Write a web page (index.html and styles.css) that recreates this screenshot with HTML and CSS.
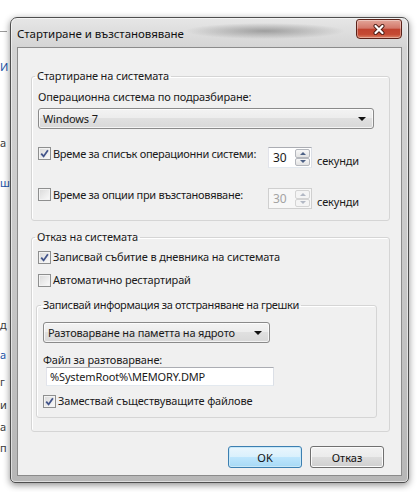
FILE: index.html
```html
<!DOCTYPE html>
<html lang="bg">
<head>
    <meta charset="UTF-8">
    <title>Стартиране и възстановяване</title>
    <link rel="stylesheet" href="styles.css">
</head>
<body>
    <div class="desktop">
        <!-- what shows of the window behind the dialog -->
        <div class="behind">
            <div class="rule"></div>
            <div class="b-1 link">И</div>
            <div class="b-2">а</div>
            <div class="b-3 link">ш</div>
            <div class="b-4">д</div>
            <div class="b-5 link">а</div>
            <div class="b-6">г</div>
            <div class="b-7">и</div>
            <div class="b-8">а</div>
            <div class="b-9">п</div>
        </div>

        <div class="window">
            <div class="titlebar">
                <span class="title">Стартиране и възстановяване</span>
                <div class="close">
                    <svg width="14" height="11" viewBox="0 0 14 11">
                        <path d="M3.5 2 L10.5 9 M10.5 2 L3.5 9" stroke="#4b1c14" stroke-width="4" stroke-linecap="round"/>
                        <path d="M3.5 2 L10.5 9 M10.5 2 L3.5 9" stroke="#fff" stroke-width="2.2" stroke-linecap="round"/>
                    </svg>
                </div>
            </div>

            <div class="client">
                <fieldset class="group startup">
                    <legend>Стартиране на системата</legend>
                    <div class="caption">Операционна система по подразбиране:</div>
                    <div class="combo wide"><span>Windows 7</span><span class="arrow"></span></div>

                    <div class="timeout-row first">
                        <div class="check">
                            <span class="box"><svg width="9" height="9" viewBox="0 0 9 9"><path d="M1.2 4.6 L3.6 7.4 L7.9 1.2" fill="none" stroke="#42548a" stroke-width="1.8"/></svg></span>
                            Време за списък операционни системи:
                        </div>
                        <div class="spin">
                            <span class="spin-value">30</span>
                            <span class="spin-buttons"><span class="up"></span><span class="down"></span></span>
                        </div>
                        <span class="unit">секунди</span>
                    </div>

                    <div class="timeout-row">
                        <div class="check">
                            <span class="box"></span>
                            Време за опции при възстановяване:
                        </div>
                        <div class="spin disabled">
                            <span class="spin-value">30</span>
                            <span class="spin-buttons"><span class="up"></span><span class="down"></span></span>
                        </div>
                        <span class="unit">секунди</span>
                    </div>
                </fieldset>

                <fieldset class="group failure">
                    <legend>Отказ на системата</legend>
                    <div class="check">
                        <span class="box"><svg width="9" height="9" viewBox="0 0 9 9"><path d="M1.2 4.6 L3.6 7.4 L7.9 1.2" fill="none" stroke="#42548a" stroke-width="1.8"/></svg></span>
                        Записвай събитие в дневника на системата
                    </div>
                    <div class="check restart">
                        <span class="box"></span>
                        Автоматично рестартирай
                    </div>

                    <fieldset class="group debug">
                        <legend>Записвай информация за отстраняване на грешки</legend>
                        <div class="combo narrow"><span>Разтоварване на паметта на ядрото</span><span class="arrow"></span></div>
                        <div class="field-caption">Файл за разтоварване:</div>
                        <div class="textbox">%SystemRoot%\MEMORY.DMP</div>
                        <div class="check overwrite">
                            <span class="box"><svg width="9" height="9" viewBox="0 0 9 9"><path d="M1.2 4.6 L3.6 7.4 L7.9 1.2" fill="none" stroke="#42548a" stroke-width="1.8"/></svg></span>
                            Замествай съществуващите файлове
                        </div>
                    </fieldset>
                </fieldset>

                <div class="buttons">
                    <button class="btn default">OK</button>
                    <button class="btn">Отказ</button>
                </div>
            </div>
        </div>
    </div>
</body>
</html>
```

FILE: styles.css
```css
* {
    box-sizing: border-box;
}

body {
    margin: 0;
    width: 420px;
    height: 492px;
    overflow: hidden;
    background: #fff;
    font-family: "Noto Sans", "Open Sans", sans-serif;
    font-size: 11px;
    color: #1a1a1a;
}

.desktop {
    display: flex;
    height: 100%;
}

/* strip of the page behind */
.behind {
    width: 10px;
    flex: none;
    white-space: nowrap;
    font-size: 11px;
    line-height: 14px;
    color: #3a3a3a;
}
.behind .rule {
    margin-top: 31px;
    width: 7px;
    height: 1px;
    background: #9a9a9a;
}
.behind .link {
    color: #1c54a8;
}
.b-1 { margin-top: 28px; }
.b-2 { margin-top: 62px; }
.b-3 { margin-top: 26px; }
.b-4 { margin-top: 128px; }
.b-5 { margin-top: 16px; }
.b-6 { margin-top: 13px; }
.b-7 { margin-top: 9px; }
.b-8 { margin-top: 8px; }
.b-9 { margin-top: 7px; }

/* dialog frame */
.window {
    margin-top: 17px;
    width: 399px;
    height: 466px;
    flex: none;
    display: flex;
    flex-direction: column;
    padding: 0 6px 6px;
    border: 1px solid #4e4e4e;
    border-radius: 7px 7px 5px 5px;
    background:
        radial-gradient(ellipse 80px 8px at 254px 13px, rgba(95, 95, 95, 0.5), rgba(95, 95, 95, 0)),
        linear-gradient(#e6e6e6, #d4d4d4 30px, #c6c6c6 60%, #b7b7b7);
    box-shadow: inset 0 0 0 1px rgba(255, 255, 255, 0.55), 0 2px 7px rgba(0, 0, 0, 0.45);
}

.titlebar {
    height: 29px;
    flex: none;
    display: flex;
    justify-content: space-between;
    align-items: flex-start;
}
.title {
    padding-top: 8px;
    line-height: 16px;
    font-size: 11.5px;
    letter-spacing: -0.05px;
    color: #111;
}
.close {
    width: 46px;
    height: 20px;
    margin-top: 1px;
    display: flex;
    align-items: center;
    justify-content: center;
    border: 1px solid #5a2118;
    border-radius: 3px 3px 4px 4px;
    background: linear-gradient(#e3a699, #d3786a 45%, #c0432f 52%, #c54a33 80%, #dc8467);
    box-shadow: inset 0 0 0 1px rgba(255, 255, 255, 0.35);
}

.client {
    flex: 1;
    padding: 20px 11px 0 13px;
    letter-spacing: -0.15px;
    background: #f0f0f0;
    border: 1px solid #8b8b8b;
}

/* group boxes */
.group {
    margin: 0;
    min-width: 0;
    padding: 5px 6px 11px;
    border: 1px solid #d5d5d5;
    border-radius: 3px;
    box-shadow: inset 1px 1px 0 #fff;
}
.group legend {
    margin-left: -3px;
    padding: 0 2px;
    line-height: 16px;
}

.caption {
    line-height: 16px;
}

.combo {
    height: 21px;
    display: flex;
    align-items: center;
    justify-content: space-between;
    padding: 0 4px 0 4px;
    white-space: nowrap;
    border: 1px solid #8a8a8a;
    border-radius: 3px;
    background: linear-gradient(#f3f3f3, #ececec 50%, #e0e0e0 50%, #d8d8d8);
    box-shadow: inset 0 0 0 1px rgba(255, 255, 255, 0.7);
}
.combo .arrow {
    width: 0;
    height: 0;
    margin-right: 3px;
    border-left: 4px solid transparent;
    border-right: 4px solid transparent;
    border-top: 4px solid #111;
}
.combo.wide {
    width: 336px;
    margin-top: 3px;
}
.combo.narrow {
    width: 227px;
}

.timeout-row {
    display: grid;
    grid-template-columns: 225px 44px auto;
    column-gap: 5px;
    align-items: start;
    margin-top: 20px;
}
.timeout-row.first {
    margin-top: 18px;
}
.timeout-row .check {
    line-height: 13px;
    white-space: nowrap;
    letter-spacing: -0.3px;
}
.unit {
    margin-top: 7px;
    line-height: 14px;
}

.check {
    display: flex;
    align-items: center;
    gap: 2px;
    line-height: 16px;
}
.box {
    width: 13px;
    height: 13px;
    flex: none;
    display: flex;
    align-items: center;
    justify-content: center;
    border: 1px solid #8e8f8f;
    background: linear-gradient(135deg, #d9d9d9, #fbfbfb);
    box-shadow: inset 0 0 0 1px #f3f3f3;
}

.spin {
    height: 21px;
    display: flex;
    background: #fff;
    border: 1px solid;
    border-color: #abadb3 #dbdfe6 #e3e9ef #e2e3ea;
}
.spin-value {
    flex: 1;
    padding-left: 4px;
    line-height: 19px;
    font-size: 12px;
}
.spin-buttons {
    width: 16px;
    display: flex;
    flex-direction: column;
    padding: 1px 1px 1px 0;
}
.spin-buttons span {
    flex: 1;
    display: flex;
    align-items: center;
    justify-content: center;
    border: 1px solid #b4b7bd;
    border-radius: 2px;
    background: linear-gradient(#f7f7f7, #e3e3e3);
}
.spin-buttons .up::after {
    content: "";
    border-left: 3px solid transparent;
    border-right: 3px solid transparent;
    border-bottom: 3px solid #4d6185;
}
.spin-buttons .down::after {
    content: "";
    border-left: 3px solid transparent;
    border-right: 3px solid transparent;
    border-top: 3px solid #4d6185;
}
.spin.disabled {
    background: #f7f7f7;
    border-color: #cfcfcf;
    color: #a3a3a3;
}
.spin.disabled .spin-buttons span {
    border-color: #d4d4d4;
    background: #f4f4f4;
}
.spin.disabled .up::after {
    border-bottom-color: #b2b8c4;
}
.spin.disabled .down::after {
    border-top-color: #b2b8c4;
}

.failure {
    margin-top: 8px;
    padding: 4px 6px 13px;
}
.failure legend {
    margin-top: -2px;
}
.restart {
    margin-top: 7px;
}

.debug {
    width: 341px;
    margin: 9px 0 0 -2px;
    padding: 9px 6px 8px;
}
.debug legend {
    margin-left: -2px;
    letter-spacing: -0.35px;
}
.field-caption {
    margin-top: 10px;
    line-height: 14px;
}
.textbox {
    width: 228px;
    height: 19px;
    margin-left: 3px;
    padding-left: 3px;
    line-height: 17px;
    background: #fff;
    border: 1px solid;
    border-color: #abadb3 #dbdfe6 #e3e9ef #e2e3ea;
}
.overwrite {
    margin-top: 7px;
}

.buttons {
    display: flex;
    justify-content: flex-end;
    gap: 8px;
    margin-top: 14px;
    padding-right: 6px;
}
.btn {
    width: 74px;
    height: 22px;
    padding: 0;
    font: inherit;
    color: #111;
    border: 1px solid #707070;
    border-radius: 3px;
    background: linear-gradient(#f2f2f2, #ebebeb 50%, #dddddd 50%, #cfcfcf);
    box-shadow: inset 0 0 0 1px #fbfbfb;
}
.btn.default {
    border-color: #3c7fb1;
    background: linear-gradient(#eaf6fd, #d9f0fc 50%, #bee6fd 50%, #a7d9f5);
    box-shadow: inset 0 0 0 1px #c8e8f8;
}
```
